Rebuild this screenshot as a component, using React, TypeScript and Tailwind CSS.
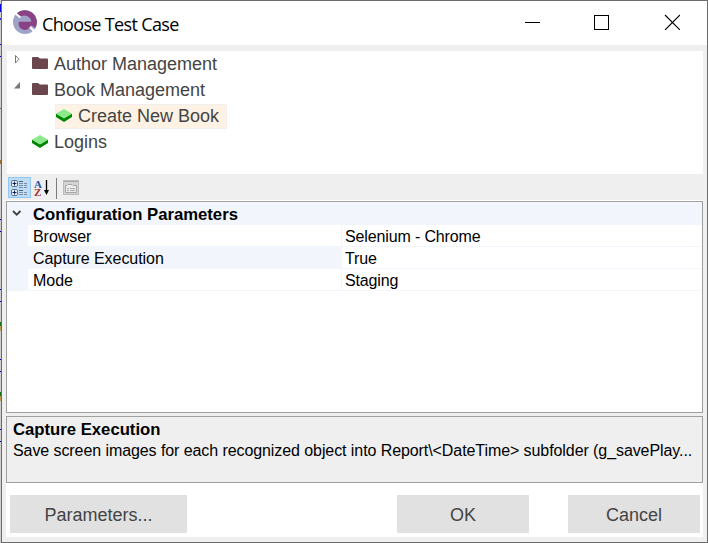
import React from "react";

function Logo() {
  return (
    <svg width="24" height="24" viewBox="0 0 24 24" className="block">
      <circle cx="12" cy="12" r="12" fill="#9ea4c6" />
      <path d="M3.5 3.5A12 12 0 0 1 22.3 18L17.8 15A7 7 0 0 0 6.5 7.5Z" fill="#8b4186" />
      <path d="M6 11.5H20V14.5L17.5 16A6 6 0 0 1 6 11.5Z" fill="#8b4186" />
      <path d="M6 11.5A6 5.5 0 0 1 18 11.5Z" fill="#a3a2c8" />
      <path d="M2.3 3.3L7.5 7.5M17 17L21.5 21.5" stroke="#fff" strokeWidth="2" />
    </svg>
  );
}

function Folder() {
  return (
    <svg width="16" height="12" viewBox="0 0 16 12" className="-mt-[2px] block">
      <path d="M1 0H6L8 1.5H15Q16 1.5 16 2.5V11Q16 12 15 12H1Q0 12 0 11V1Q0 0 1 0Z" fill="#6b464c" />
    </svg>
  );
}

function Block() {
  return (
    <svg width="16" height="13" viewBox="0 0 16 13" className="-mt-[2px] block">
      <path d="M0 4.5V8L8 13L16 8V4.5L8 9Z" fill="#008500" />
      <path d="M8 0L16 4.8L8 9.6L0 4.8Z" fill="#8bea8b" />
    </svg>
  );
}

function TreeRow({ arrow, icon, label }: { arrow?: React.ReactNode; icon: React.ReactNode; label: string }) {
  return (
    <div className="flex h-[26px] items-center">
      <div className="h-full w-[25px] shrink-0 pt-[4px] pl-[7px]">{arrow}</div>
      {icon}
      <span className="ml-[6px] text-[18px] leading-[26px]">{label}</span>
    </div>
  );
}

function PropertyRow({ name, value, selected }: { name: string; value: string; selected?: boolean }) {
  return (
    <div className="flex h-[22px] border-b border-[#f2f6fc] text-[16px] leading-[23px] text-black">
      <div className={`w-[314px] border-r border-[#f2f6fc] pl-[5px] tracking-[-0.05px] ${selected ? "bg-[#f2f6fc]" : "bg-white"}`}>{name}</div>
      <div className="pl-[3px] tracking-[-0.14px]">{value}</div>
    </div>
  );
}

const marks: [number, number, string][] = [
  [4, 8, "#0000d8"], [18, 2, "#3030e0"], [44, 1, "#0000d8"], [56, 1, "#0000d8"],
  [108, 1, "#826a48"], [160, 4, "#9a7030"], [219, 1, "#0000a0"], [231, 1, "#0000a0"],
  [289, 1, "#0000a0"], [301, 1, "#0000a0"], [322, 4, "#187018"], [326, 5, "#b69852"],
  [359, 1, "#0000a0"], [371, 1, "#0000a0"], [392, 4, "#187018"], [396, 5, "#b69852"],
  [429, 1, "#0000a0"], [441, 1, "#0000a0"],
];

function Toolbar() {
  return (
    <div className="flex h-[26px] items-start pt-[3px] pl-[2px]">
      <div className="flex h-[21px] w-[23px] items-center justify-center border border-[#90c8f6] bg-[#c0dcf3]">
        <svg width="17" height="17" viewBox="0 0 17 17" className="block shrink-0">
          <g fill="#fff" stroke="#53719d">
            <rect x="0.5" y="1.5" width="6" height="6" rx="1.5" />
            <rect x="0.5" y="10.5" width="6" height="6" rx="1.5" />
          </g>
          <path d="M1.5 4.5H5.5M3.5 2.5V6.5M1.5 13.5H5.5M3.5 11.5V15.5" stroke="#10245c" strokeWidth="1.2" />
          <path d="M8 2.5H12M8 11.5H12" stroke="#486488" />
          <path d="M8 4.5H12M8 6.5H12M8 8.5H12M8 13.5H12M8 15.5H12M13 4.5H16M13 6.5H16M13 8.5H16M13 13.5H16M13 15.5H16" stroke="#7890ac" />
        </svg>
      </div>
      <div className="ml-[2px] flex h-[20px] w-[18px] pt-[2px]">
        <div className="w-[9px] pt-px pl-px font-['Liberation_Serif',serif] text-[11px] leading-[8px] font-bold">
          <div className="text-[#2858a8]">A</div>
          <div className="text-[#9c3434]">Z</div>
        </div>
        <svg width="8" height="16" viewBox="0 0 8 16" className="ml-[1px] block">
          <path d="M3.5 1V12" stroke="#000" strokeWidth="1.3" />
          <path d="M1 11H6L3.5 16Z" fill="#000" />
        </svg>
      </div>
      <div className="mt-px ml-[5px] h-[21px] w-px bg-[#7c7c7c]" />
      <svg width="16" height="15" viewBox="0 0 16 15" className="mt-[3px] ml-[6px]">
        <rect x="0.5" y="0.5" width="15" height="14" fill="#d4d4d4" stroke="#bbb" />
        <path d="M1 1.5H15" stroke="#a9a9a9" />
        <path d="M2.5 12.5V5.5H4L5 4.5H9L10 5.5H13.5V12.5Z" fill="#ededed" stroke="#a7a7a7" />
        <path d="M4 8.5H6M7 8.5H12M4 10.5H6M7 10.5H12" stroke="#aaa" />
      </svg>
    </div>
  );
}

export default function App() {
  return (
    <div className="flex h-[543px] w-[708px] overflow-hidden bg-[#cfcfcf] font-['Liberation_Sans',Arial,sans-serif] whitespace-nowrap">
      <svg width="1" height="543" className="block shrink-0">
        {marks.map(([y, h, color]) => <rect key={y} x="0" y={y} width="1" height={h} fill={color} />)}
      </svg>
      <div className="flex w-[707px] flex-col border border-[#6b6b6b] bg-[#efefef]">
        <header className="flex h-[44px] shrink-0 items-center bg-white">
          <div className="-mt-[2px] ml-[11px]"><Logo /></div>
          <h1 className="mt-[2px] ml-[5px] w-[200px] font-['Open_Sans','Noto_Sans',sans-serif] text-[18px] leading-[24px] tracking-[-0.65px] text-black">Choose Test Case</h1>
          <div className="mr-[27px] ml-auto flex items-center">
            <svg width="155" height="16" viewBox="0 0 155 16" className="-mt-[2px] block w-[155px]">
              <path d="M0 8.5H15" stroke="#000" />
              <rect x="69.5" y="1.5" width="14" height="14" fill="none" stroke="#000" />
              <path d="M140 1L155 16M155 1L140 16" stroke="#000" strokeWidth="1.1" />
            </svg>
          </div>
        </header>
        <main className="mx-[4px] pt-[6px]">
          <section className="ml-px h-[123px] bg-white text-[#444]">
            <TreeRow
              arrow={<svg width="7" height="9" className="block"><path d="M1.5 0.5V8L5 4.25Z" fill="#fff" stroke="#777" /></svg>}
              icon={<Folder />}
              label="Author Management"
            />
            <TreeRow
              arrow={<svg width="6" height="8" className="block"><path d="M6 1V7.5H0Z" fill="#777" /></svg>}
              icon={<Folder />}
              label="Book Management"
            />
            <div className="mt-px ml-[48px] flex h-[25px] w-[172px] items-center border border-[#f3eeee] bg-[#fef2e4]">
              <Block />
              <span className="ml-[6px] text-[18px]">Create New Book</span>
            </div>
            <TreeRow icon={<Block />} label="Logins" />
          </section>
          <Toolbar />
          <div className="h-px bg-white" />
          <section className="h-[212px] border border-[#a0a0a0] bg-white">
            <div className="flex h-[89px] bg-[#f2f6fc]">
              <div className="w-[21px] shrink-0 pt-[8px] pl-[5px]">
                <svg width="10" height="8" viewBox="0 0 10 8" className="block"><path d="M1 1L4.7 4.7L8.5 1" fill="none" stroke="#404040" strokeWidth="1.8" /></svg>
              </div>
              <div className="flex-1">
                <h2 className="h-[23px] pl-[5px] text-[16.7px] leading-[25px] font-bold text-black">Configuration Parameters</h2>
                <div className="bg-white">
                  <PropertyRow name="Browser" value="Selenium - Chrome" />
                  <PropertyRow name="Capture Execution" value="True" selected />
                  <PropertyRow name="Mode" value="Staging" />
                </div>
              </div>
            </div>
          </section>
          <section className="mt-[3px] h-[67px] border border-[#a0a0a0] bg-[#efefef] pt-[2px] pl-[6px] text-black">
            <h2 className="text-[16.7px] leading-[21px] font-bold">Capture Execution</h2>
            <p className="text-[16px] leading-[22px] tracking-[-0.08px]">Save screen images for each recognized object into Report\&lt;DateTime&gt; subfolder (g_savePlay...</p>
          </section>
          <footer className="flex h-[54px] bg-white pt-[12px] pl-[4px] text-[18px] text-[#444]">
            <button className="h-[38px] w-[177px] bg-[#e1e1e1] pt-[3px]">Parameters...</button>
            <button className="ml-[210px] h-[38px] w-[132px] bg-[#e1e1e1] pt-[3px]">OK</button>
            <button className="ml-[39px] h-[38px] w-[132px] bg-[#e1e1e1] pt-[3px]">Cancel</button>
          </footer>
        </main>
      </div>
    </div>
  );
}
